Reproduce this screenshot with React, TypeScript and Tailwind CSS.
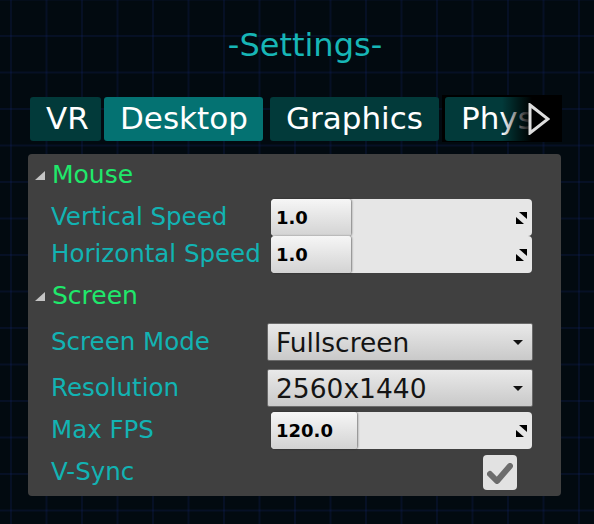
import React from "react";

function ResizeIcon() {
  return (
    <svg width="11" height="12" viewBox="0 0 11 12" className="shrink-0">
      <polygon points="3,0 11,0 11,7" fill="#000" />
      <polygon points="0,5 0,12 8,12" fill="#000" />
    </svg>
  );
}

function Caret() {
  return (
    <svg width="10" height="5" viewBox="0 0 10 5" className="shrink-0">
      <polygon points="0,0 10,0 5,5" fill="#111" />
    </svg>
  );
}

function Slider({ value, handle }: { value: string; handle: string }) {
  return (
    <div className="ml-[4px] flex h-[37px] w-[261px] items-center rounded-[4px] bg-[#e6e6e6]">
      <div
        className={
          "flex h-full items-center rounded-l-[4px] rounded-r-[3px] bg-gradient-to-b from-[#f6f6f6] to-[#d3d3d3] pl-[5px] text-[18px] font-bold text-black shadow-[1px_0_2px_rgba(0,0,0,0.45)] font-['DejaVu_Sans',sans-serif] " +
          handle
        }
      >
        {value}
      </div>
      <div className="flex-1" />
      <div className="mr-[5px]">
        <ResizeIcon />
      </div>
    </div>
  );
}

function Dropdown({ value }: { value: string }) {
  return (
    <div className="flex h-[38px] w-[266px] items-center rounded-[2px] border border-[#6a6a6a] bg-gradient-to-b from-[#e9e9e9] to-[#c9c9c9] pl-[8px] pr-[9px]">
      <span className="flex-1 pt-[2px] text-[26.5px] leading-none text-[#141414] font-['DejaVu_Sans',sans-serif]">{value}</span>
      <Caret />
    </div>
  );
}

function Label({ children }: { children: React.ReactNode }) {
  return (
    <div className="flex items-center text-[24.5px] leading-none text-[#12b3b3] font-['DejaVu_Sans',sans-serif]">
      {children}
    </div>
  );
}

function Header({ children, h }: { children: React.ReactNode; h: string }) {
  return (
    <div className={"flex items-center " + h}>
      <svg width="10" height="9" viewBox="0 0 10 9" className="ml-[7px] mr-[7px] mt-[3px]">
        <polygon points="10,0 10,9 0,9" fill="#c4c4c4" />
      </svg>
      <span className="text-[25px] leading-none text-[#1fe86b] font-['DejaVu_Sans',sans-serif]">{children}</span>
    </div>
  );
}

function Tab({ label, w, active }: { label: string; w: string; active?: boolean }) {
  return (
    <div
      className={
        "flex h-[44px] shrink-0 items-center rounded-[3px] pl-[16px] text-[31px] leading-none text-white font-['DejaVu_Sans',sans-serif] " +
        w +
        (active ? " bg-[#047272]" : " bg-[#023a3a]")
      }
    >
      {label}
    </div>
  );
}

export default function App() {
  return (
    <div className="h-[524px] w-[594px] overflow-hidden bg-[#020a10] bg-[linear-gradient(to_right,rgba(20,40,120,0.2)_2px,transparent_2px),linear-gradient(to_bottom,rgba(20,40,120,0.2)_2px,transparent_2px)] [background-size:35.5px_36.5px] [background-position:10px_35px]">
      <div className="flex h-[90px] items-center justify-center pl-[16px]">
        <span className="text-[32px] leading-none text-[#17b6b6] font-['DejaVu_Sans',sans-serif]">-Settings-</span>
      </div>

      <div className="ml-[30px] mt-[5px] flex h-[47px] w-[532px] items-center gap-[3px]">
        <Tab label="VR" w="w-[71px]" />
        <Tab label="Desktop" w="w-[159px]" active />
        <div className="w-[1px]" />
        <Tab label="Graphics" w="w-[169px]" />
        <div className="relative flex h-[47px] flex-1 items-center overflow-hidden bg-black pl-[3px]">
          <Tab label="Phys" w="w-[140px]" />
          <div className="absolute right-0 top-0 flex h-full w-[60px] items-center bg-gradient-to-r from-transparent via-black to-black via-50%">
            <svg width="22" height="32" viewBox="0 0 22 32" className="ml-[26px]">
              <polygon points="2,2 20,16 2,30" fill="none" stroke="#dedede" strokeWidth="3" strokeLinejoin="miter" />
            </svg>
          </div>
        </div>
      </div>

      <div className="ml-[28px] mt-[12px] h-[342px] w-[533px] rounded-[4px] bg-[#404040]">
        <Header h="h-[40px]">Mouse</Header>
        <div className="mt-[5px] grid grid-cols-[216px_266px] pl-[23px]">
          <Label>Vertical Speed</Label>
          <Slider value="1.0" handle="w-[80px]" />
          <Label>Horizontal Speed</Label>
          <Slider value="1.0" handle="w-[80px]" />
        </div>
        <Header h="h-[44px]">Screen</Header>
        <div className="mt-[6px] grid grid-cols-[216px_266px] pl-[23px]">
          <Label>Screen Mode</Label>
          <Dropdown value="Fullscreen" />
          <div className="col-span-2 h-[8px]" />
          <Label>Resolution</Label>
          <Dropdown value="2560x1440" />
          <div className="col-span-2 h-[5px]" />
          <Label>Max FPS</Label>
          <Slider value="120.0" handle="w-[86px]" />
          <div className="col-span-2 h-[6px]" />
          <Label>V-Sync</Label>
          <div className="h-[35px]">
            <div className="ml-[216px] flex h-[35px] w-[34px] items-center justify-center rounded-[4px] bg-[#e2e2e2]">
              <svg width="28" height="24" viewBox="0 0 28 24" className="blur-[0.6px]">
                <path d="M4 13 L11 20 L24 5" fill="none" stroke="#6c6c6c" strokeWidth="6" strokeLinecap="round" strokeLinejoin="round" />
              </svg>
            </div>
          </div>
        </div>
      </div>
    </div>
  );
}
